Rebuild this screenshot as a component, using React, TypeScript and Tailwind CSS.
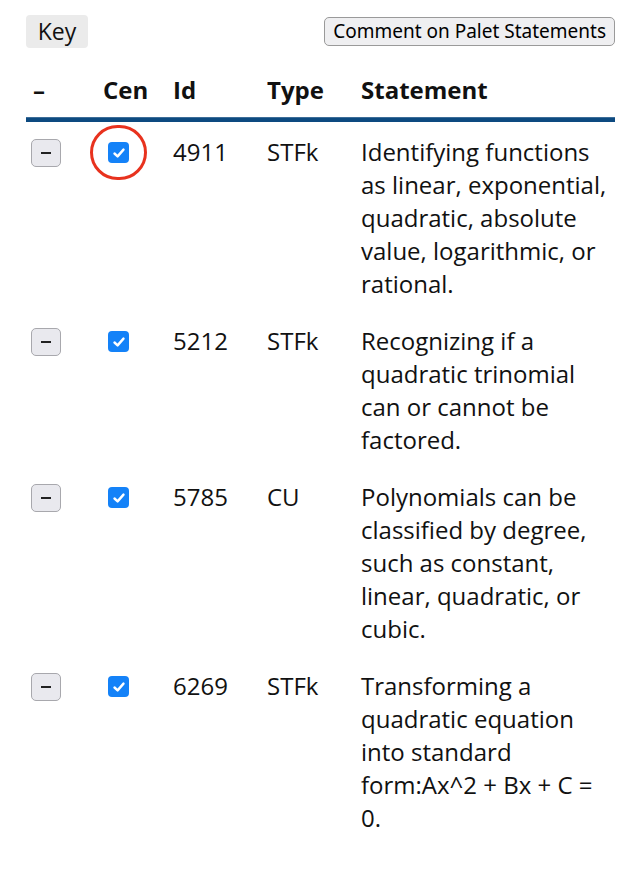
import React from "react";

const rows = [
  { id: "4911", type: "STFk", text: "Identifying functions as linear, exponential, quadratic, absolute value, logarithmic, or rational.", circled: true },
  { id: "5212", type: "STFk", text: "Recognizing if a quadratic trinomial can or cannot be factored." },
  { id: "5785", type: "CU", text: "Polynomials can be classified by degree, such as constant, linear, quadratic, or cubic." },
  { id: "6269", type: "STFk", text: "Transforming a quadratic equation into standard form:Ax^2 + Bx + C = 0." },
];

function Check({ circled }: { circled?: boolean }) {
  return (
    <div className="relative w-[21px] h-[21px] mt-[7px]">
      <div className="w-[21px] h-[21px] rounded-[4px] bg-[#1482f8] flex items-center justify-center">
        <svg width="14" height="14" viewBox="0 0 14 14">
          <path d="M2.5 7.5 L5.6 10.4 L11.5 3.6" fill="none" stroke="white" strokeWidth="2.4" strokeLinecap="round" strokeLinejoin="round" />
        </svg>
      </div>
      {circled && (
        <div className="absolute left-[-18px] top-[-17px] w-[57px] h-[55px] rounded-full border-[3px] border-[#e8321e]" />
      )}
    </div>
  );
}

export default function App() {
  return (
    <div className="w-[640px] min-h-[882px] bg-white text-[#111] px-[26px] pt-[15px]" style={{ fontFamily: "'Open Sans', 'Noto Sans', sans-serif" }}>
      <div className="flex justify-between items-start w-[589px]">
        <button className="h-[33px] w-[62px] bg-[#ebebeb] rounded-[4px] text-[23px] leading-[33px] text-[#111]">Key</button>
        <button className="mt-[2px] h-[29px] px-[8px] bg-[#efeff1] border border-[#9a9a9a] rounded-[5px] text-[19px] leading-[27px] text-black" style={{ fontFamily: "'Noto Sans', sans-serif" }}>
          Comment on Palet Statements
        </button>
      </div>
      <div className="w-[589px] mt-[25px]">
        <div className="grid grid-cols-[77px_70px_94px_94px_254px] text-[24px] leading-[33px] font-bold pb-[11px]">
          <div className="pl-[7px]">–</div>
          <div>Cen</div>
          <div>Id</div>
          <div>Type</div>
          <div>Statement</div>
        </div>
        <div className="h-[5px] bg-[#0d4a80] border-t border-[#3d6d98]" />
        <div className="pt-[13px]">
          {rows.map((r) => (
            <div key={r.id} className="grid grid-cols-[77px_70px_94px_94px_254px] text-[24px] leading-[33px] pb-[24px]">
              <div className="pl-[5px]">
                <div className="mt-[4px] w-[30px] h-[28px] rounded-[5px] border border-[#a8a8ad] bg-[#e9e9ee] flex items-center justify-center">
                  <div className="w-[10px] h-[2px] bg-[#222]" />
                </div>
              </div>
              <div className="pl-[5px]">
                <Check circled={r.circled} />
              </div>
              <div>{r.id}</div>
              <div>{r.type}</div>
              <div>{r.text}</div>
            </div>
          ))}
        </div>
      </div>
    </div>
  );
}
